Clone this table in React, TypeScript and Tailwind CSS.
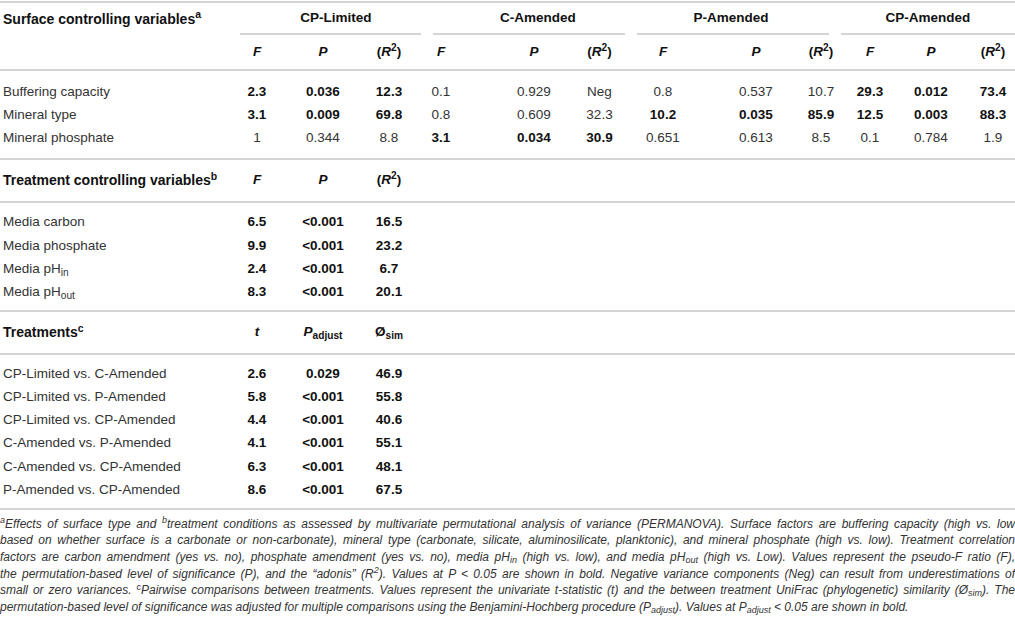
import React from "react";

const cols =
  "grid grid-cols-[224px_66px_66px_59px_73px_79px_65px_78px_78px_58px_54px_62px_53px]";

// nudges so each column's values sit where the printed table has them
const cc = [
  "text-center",
  "text-center",
  "text-center pl-[7px]",
  "text-center pr-[21px]",
  "text-center pl-[13px]",
  "text-center",
  "text-center pr-[16px]",
  "text-center pl-[14px]",
  "text-center pl-[8px]",
  "text-center pr-[6px]",
  "text-center",
  "text-center pl-[9px]",
];

type Row = { label: React.ReactNode; vals: string[]; bold: boolean[] };

const surface: Row[] = [
  {
    label: "Buffering capacity",
    vals: ["2.3", "0.036", "12.3", "0.1", "0.929", "Neg", "0.8", "0.537", "10.7", "29.3", "0.012", "73.4"],
    bold: [true, false, false, true],
  },
  {
    label: "Mineral type",
    vals: ["3.1", "0.009", "69.8", "0.8", "0.609", "32.3", "10.2", "0.035", "85.9", "12.5", "0.003", "88.3"],
    bold: [true, false, true, true],
  },
  {
    label: "Mineral phosphate",
    vals: ["1", "0.344", "8.8", "3.1", "0.034", "30.9", "0.651", "0.613", "8.5", "0.1", "0.784", "1.9"],
    bold: [false, true, false, false],
  },
];

const treatment: [React.ReactNode, string, string, string][] = [
  ["Media carbon", "6.5", "<0.001", "16.5"],
  ["Media phosphate", "9.9", "<0.001", "23.2"],
  [<>Media pH<sub>in</sub></>, "2.4", "<0.001", "6.7"],
  [<>Media pH<sub>out</sub></>, "8.3", "<0.001", "20.1"],
];

const pairs: [string, string, string, string][] = [
  ["CP-Limited vs. C-Amended", "2.6", "0.029", "46.9"],
  ["CP-Limited vs. P-Amended", "5.8", "<0.001", "55.8"],
  ["CP-Limited vs. CP-Amended", "4.4", "<0.001", "40.6"],
  ["C-Amended vs. P-Amended", "4.1", "<0.001", "55.1"],
  ["C-Amended vs. CP-Amended", "6.3", "<0.001", "48.1"],
  ["P-Amended vs. CP-Amended", "8.6", "<0.001", "67.5"],
];

const groups = [
  { name: "CP-Limited", cls: "ml-[16px] -mr-[6px] pl-[11px]" },
  { name: "C-Amended", cls: "ml-[18px] mr-[7px] pl-[18px]" },
  { name: "P-Amended", cls: "ml-[5px] mr-[17px] pr-[4px]" },
  { name: "CP-Amended", cls: "-ml-[5px]" },
];

function Line() {
  return <div className="h-[2px] bg-[#d4d4d4]" />;
}

function R2() {
  return (
    <span className="font-bold">
      (<i>R</i>
      <sup>2</sup>)
    </span>
  );
}

function ShortRow({ r }: { r: [React.ReactNode, string, string, string] }) {
  return (
    <div className={cols + " h-[23.3px] items-center"}>
      <div className="pl-[3px]">{r[0]}</div>
      <div className={cc[0] + " font-bold text-[#111]"}>{r[1]}</div>
      <div className={cc[1] + " font-bold text-[#111]"}>{r[2]}</div>
      <div className={cc[2] + " font-bold text-[#111]"}>{r[3]}</div>
    </div>
  );
}

export default function App() {
  return (
    <div className="w-[1015px] pt-[1px] bg-white text-[#333] text-[13.5px] font-['Liberation_Sans',Arial,sans-serif]">
      <Line />
      {/* column group header */}
      <div className={cols + " h-[32px]"}>
        <div className="pl-[3px] flex items-center font-bold text-[#111] text-[14px]">
          <span>
            Surface controlling variables<sup>a</sup>
          </span>
        </div>
        {groups.map((g) => (
          <div
            key={g.name}
            className={
              "col-span-3 flex items-center justify-center font-bold text-[#111] border-b-2 border-[#d4d4d4] " +
              g.cls
            }
          >
            {g.name}
          </div>
        ))}
      </div>
      <div className={cols + " h-[34px] items-center text-[#111]"}>
        <div />
        {groups.map((g, gi) => (
          <React.Fragment key={g.name}>
            <div className={cc[gi * 3] + " font-bold italic"}>F</div>
            <div className={cc[gi * 3 + 1] + " font-bold italic"}>P</div>
            <div className={cc[gi * 3 + 2]}>
              <R2 />
            </div>
          </React.Fragment>
        ))}
      </div>
      <Line />
      <div className="pt-[9px] pb-[8px]">
        {surface.map((r, ri) => (
          <div key={ri} className={cols + " h-[23.3px] items-center"}>
            <div className="pl-[3px]">{r.label}</div>
            {r.vals.map((v, i) => (
              <div
                key={i}
                className={cc[i] + (r.bold[Math.floor(i / 3)] ? " font-bold text-[#111]" : "")}
              >
                {v}
              </div>
            ))}
          </div>
        ))}
      </div>
      <Line />
      <div className={cols + " h-[41px] items-center font-bold text-[#111]"}>
        <div className="pl-[3px] text-[14px]">
          Treatment controlling variables<sup>b</sup>
        </div>
        <div className={cc[0] + " italic"}>F</div>
        <div className={cc[1] + " italic"}>P</div>
        <div className={cc[2]}>
          <R2 />
        </div>
      </div>
      <Line />
      <div className="pt-[8px] pb-[6px]">
        {treatment.map((r, ri) => (
          <ShortRow key={ri} r={r} />
        ))}
      </div>
      <Line />
      <div className={cols + " h-[41px] items-center font-bold text-[#111]"}>
        <div className="pl-[3px] text-[14px]">
          Treatments<sup>c</sup>
        </div>
        <div className={cc[0] + " italic"}>t</div>
        <div className={cc[1]}>
          <i>P</i>
          <sub>adjust</sub>
        </div>
        <div className={cc[2]}>
          Ø<sub>sim</sub>
        </div>
      </div>
      <Line />
      <div className="pt-[7px] pb-[6px]">
        {pairs.map((r, ri) => (
          <ShortRow key={ri} r={r} />
        ))}
      </div>
      <Line />
      <div className="pt-[6px] italic text-[12px] leading-[16.6px] text-[#333] whitespace-nowrap">
        <div className="text-justify [text-align-last:justify]">
          <sup>a</sup>Effects of surface type and <sup>b</sup>treatment conditions as assessed by multivariate
          permutational analysis of variance (PERMANOVA). Surface factors are buffering capacity (high vs. low
        </div>
        <div className="text-justify [text-align-last:justify]">
          based on whether surface is a carbonate or non-carbonate), mineral type (carbonate, silicate,
          aluminosilicate, planktonic), and mineral phosphate (high vs. low). Treatment correlation
        </div>
        <div className="text-justify [text-align-last:justify]">
          factors are carbon amendment (yes vs. no), phosphate amendment (yes vs. no), media pH<sub>in</sub> (high
          vs. low), and media pH<sub>out</sub> (high vs. Low). Values represent the pseudo-F ratio (F),
        </div>
        <div className="text-justify [text-align-last:justify]">
          the permutation-based level of significance (P), and the “adonis” (R<sup>2</sup>). Values at P {"<"} 0.05
          are shown in bold. Negative variance components (Neg) can result from underestimations of
        </div>
        <div className="text-justify [text-align-last:justify]">
          small or zero variances. <sup>c</sup>Pairwise comparisons between treatments. Values represent the
          univariate t-statistic (t) and the between treatment UniFrac (phylogenetic) similarity (Ø<sub>sim</sub>).
          The
        </div>
        <div>
          permutation-based level of significance was adjusted for multiple comparisons using the
          Benjamini-Hochberg procedure (P<sub>adjust</sub>). Values at P<sub>adjust</sub> {"<"} 0.05 are shown in
          bold.
        </div>
      </div>
    </div>
  );
}
